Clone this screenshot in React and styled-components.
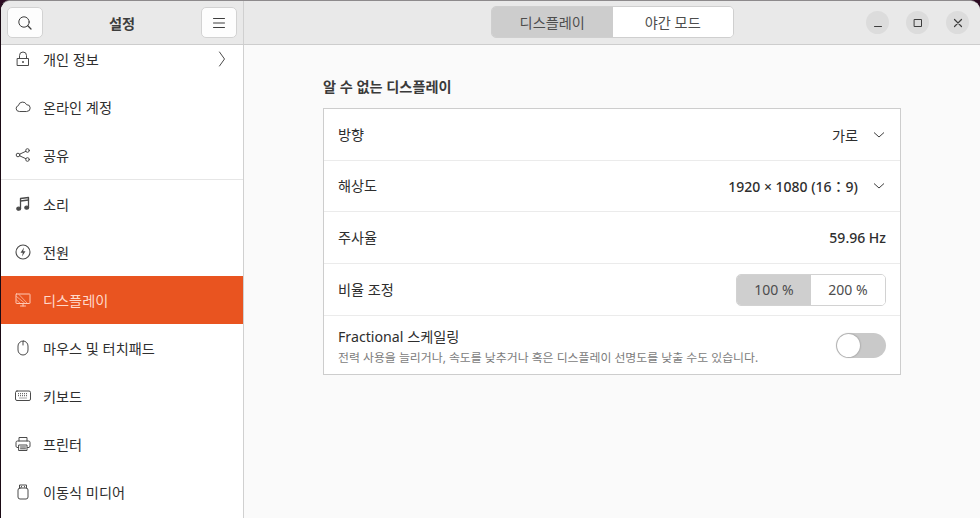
import React from "react";
import styled, { createGlobalStyle } from "styled-components";

const FONT = '"Noto Sans", "Noto Sans CJK KR", sans-serif';

const GlobalStyle = createGlobalStyle`
    html, body {
        margin: 0;
        padding: 0;
        background: #2c0a22;
    }
    body {
        font-family: ${FONT};
    }
    * {
        box-sizing: border-box;
    }
`;

const iconProps = {
    width: 16,
    height: 16,
    viewBox: "0 0 16 16",
    fill: "none",
    stroke: "currentColor",
    strokeWidth: 1,
    strokeLinecap: "round",
    strokeLinejoin: "round",
};

const Search = () => (
    <svg {...iconProps} strokeWidth={1}>
        <circle cx="7" cy="7" r="5.200" />
        <path d="M10.800 10.800 14 14" strokeWidth={1.300} />
    </svg>
);
const Menu = () => (
    <svg {...iconProps} strokeWidth={1}>
        <path d="M2.500 3.500h11M2.500 8h11M2.500 12.500h11" />
    </svg>
);
const Lock = () => (
    <svg {...iconProps}>
        <path d="M2.500 7.500h11v7h-11zM4.500 7.500V4.500a3.500 3.500 0 0 1 7 0v3" />
        <circle cx="8" cy="11" r="1" fill="currentColor" stroke="none" />
    </svg>
);
const Cloud = () => (
    <svg {...iconProps}>
        <path d="M4 12.500a3 3 0 0 1-.6-5.900 4.300 4.300 0 0 1 8.200-.9 3.400 3.400 0 0 1 .4 6.800z" />
    </svg>
);
const Share = () => (
    <svg {...iconProps}>
        <circle cx="3" cy="8" r="1.800" />
        <circle cx="12.500" cy="3.500" r="1.800" />
        <circle cx="12.500" cy="12.500" r="1.800" />
        <path d="M4.600 7.200 10.900 4.300M4.600 8.800l6.300 2.900" />
    </svg>
);
const Music = () => (
    <svg {...iconProps} strokeWidth={1.300}>
        <path d="M5.500 12.500V2.500l8-1v10" />
        <path d="M5.500 5l8-1" />
        <ellipse cx="3.700" cy="12.700" rx="1.900" ry="1.500" fill="currentColor" />
        <ellipse cx="11.700" cy="11.700" rx="1.900" ry="1.500" fill="currentColor" />
    </svg>
);
const Power = () => (
    <svg {...iconProps} strokeWidth={1.100}>
        <circle cx="8" cy="8" r="7" />
        <path d="M9 3.500 5.500 8.700h2.300L7 12.500l3.500-5.200H8.200z" fill="currentColor" stroke="none" />
    </svg>
);
const Display = () => (
    <svg {...iconProps}>
        <path d="M1.500 2h13a.5.5 0 0 1 .5.5v8.500a.5.5 0 0 1-.5.5h-13A.5.5 0 0 1 1 11V2.500A.5.5 0 0 1 1.500 2z" />
        <path d="M5.500 14h5M8 11.500V14" />
        <path d="M1.500 4.500l8 6.500M1.500 8l4 3.500M4 2.500l8 8.500" strokeWidth={0.700} />
    </svg>
);
const Mouse = () => (
    <svg {...iconProps}>
        <rect x="3" y="1" width="10" height="14" rx="5" />
        <path d="M8 1.500V5" />
    </svg>
);
const Keyboard = () => (
    <svg {...iconProps}>
        <rect x="0.500" y="3" width="15" height="9.500" rx="1.500" />
        <path d="M3 5.700h10M3 7.700h10M4.500 10h7" strokeDasharray="1 1" strokeLinecap="butt" />
    </svg>
);
const Printer = () => (
    <svg {...iconProps}>
        <path d="M4 5V1.500h8V5" />
        <path d="M3.500 11.500H2a1.500 1.500 0 0 1-1-1.400V6.500A1.500 1.500 0 0 1 2.500 5h11A1.500 1.500 0 0 1 15 6.500v3.600a1.500 1.500 0 0 1-1 1.400h-1.500" />
        <path d="M4 9h8v5.500H4zM5.500 11h5M5.500 12.800h5" />
    </svg>
);
const Usb = () => (
    <svg {...iconProps}>
        <rect x="3" y="4" width="10" height="11" rx="2" />
        <path d="M4.500 4V1h7v3M6.500 2.500v.5M9.500 2.500v.5" />
    </svg>
);
const ChevronRight = () => (
    <svg {...iconProps}>
        <path d="M5.500 1 10.500 8l-5 7" />
    </svg>
);
const ChevronDown = () => (
    <svg width="12" height="12" viewBox="0 0 12 12" fill="none" stroke="currentColor" strokeWidth="1">
        <path d="M1 3.500 6 8l5-4.500" />
    </svg>
);

const NAV_GROUPS = [
    [
        { label: "개인 정보", icon: <Lock />, more: true },
        { label: "온라인 계정", icon: <Cloud /> },
        { label: "공유", icon: <Share /> },
    ],
    [
        { label: "소리", icon: <Music /> },
        { label: "전원", icon: <Power /> },
        { label: "디스플레이", icon: <Display />, active: true },
        { label: "마우스 및 터치패드", icon: <Mouse /> },
        { label: "키보드", icon: <Keyboard /> },
        { label: "프린터", icon: <Printer /> },
        { label: "이동식 미디어", icon: <Usb /> },
    ],
];

export default function App() {
    return (
        <>
            <GlobalStyle />
            <Window>
                <Header>
                    <SideHeader>
                        <ToolButton aria-label="검색">
                            <Search />
                        </ToolButton>
                        <Title>설정</Title>
                        <ToolButton aria-label="메뉴">
                            <Menu />
                        </ToolButton>
                    </SideHeader>
                    <MainHeader>
                        <Tabs>
                            <Tab $active>디스플레이</Tab>
                            <Tab>야간 모드</Tab>
                        </Tabs>
                        <WindowControls>
                            <WindowButton aria-label="최소화">
                                <svg {...iconProps} width="12" height="12" viewBox="0 0 12 12">
                                    <path d="M2.500 9.500h7" />
                                </svg>
                            </WindowButton>
                            <WindowButton aria-label="최대화">
                                <svg {...iconProps} width="12" height="12" viewBox="0 0 12 12">
                                    <rect x="2.500" y="2.500" width="7" height="7" />
                                </svg>
                            </WindowButton>
                            <WindowButton aria-label="닫기">
                                <svg {...iconProps} width="12" height="12" viewBox="0 0 12 12" strokeWidth="1.200">
                                    <path d="M2.500 2.500l7 7M9.500 2.500l-7 7" />
                                </svg>
                            </WindowButton>
                        </WindowControls>
                    </MainHeader>
                </Header>
                <Body>
                    <Sidebar>
                        <NavList>
                            {NAV_GROUPS.map((group, i) => (
                                <NavGroup key={i}>
                                    {group.map((item) => (
                                        <NavRow key={item.label} $active={item.active}>
                                            <NavIcon $active={item.active}>{item.icon}</NavIcon>
                                            <NavLabel>{item.label}</NavLabel>
                                            {item.more && (
                                                <NavMore>
                                                    <ChevronRight />
                                                </NavMore>
                                            )}
                                        </NavRow>
                                    ))}
                                </NavGroup>
                            ))}
                        </NavList>
                    </Sidebar>
                    <Content>
                        <Heading>알 수 없는 디스플레이</Heading>
                        <Card>
                            <Row>
                                <RowLabel>방향</RowLabel>
                                <RowValue>
                                    가로
                                    <ChevronSlot>
                                        <ChevronDown />
                                    </ChevronSlot>
                                </RowValue>
                            </Row>
                            <Row>
                                <RowLabel>해상도</RowLabel>
                                <RowValue $numeric>
                                    1920 × 1080 (16：9)
                                    <ChevronSlot>
                                        <ChevronDown />
                                    </ChevronSlot>
                                </RowValue>
                            </Row>
                            <Row>
                                <RowLabel>주사율</RowLabel>
                                <RowValue $numeric>59.96 Hz</RowValue>
                            </Row>
                            <Row>
                                <RowLabel>비율 조정</RowLabel>
                                <Scale>
                                    <ScaleOption $active>100 %</ScaleOption>
                                    <ScaleOption>200 %</ScaleOption>
                                </Scale>
                            </Row>
                            <TallRow>
                                <TallText>
                                    <RowLabel>Fractional 스케일링</RowLabel>
                                    <RowHint>
                                        전력 사용을 늘리거나, 속도를 낮추거나 혹은 디스플레이 선명도를 낮출 수도 있습니다.
                                    </RowHint>
                                </TallText>
                                <Switch>
                                    <Knob />
                                </Switch>
                            </TallRow>
                        </Card>
                    </Content>
                </Body>
            </Window>
        </>
    );
}

const Window = styled.div`
    background: #fafafa;
    border-left: 1px solid #1a0a14;
    border-top: 1px solid #8d8a8c;
    border-top-left-radius: 10px;
    border-top-right-radius: 10px;
    color: #2e2e2e;
    display: flex;
    flex-direction: column;
    height: 518px;
    overflow: hidden;
    width: 980px;
`;

const Header = styled.header`
    background: #e9e9e9;
    border-bottom: 1px solid #cdcdcd;
    display: flex;
    flex-shrink: 0;
    height: 44px;
`;

const SideHeader = styled.div`
    align-items: center;
    border-right: 1px solid #d0d0d0;
    display: flex;
    flex-shrink: 0;
    justify-content: space-between;
    padding: 0 6px;
    width: 243px;
`;

const ToolButton = styled.button`
    align-items: center;
    background: #fdfdfd;
    border: 1px solid #d2d2d2;
    border-radius: 5px;
    color: #3d3d3d;
    display: flex;
    height: 31px;
    justify-content: center;
    padding: 0;
    width: 36px;
`;

const Title = styled.div`
    color: #3d3d3d;
    font-size: 14.200px;
    font-weight: 700;
`;

const MainHeader = styled.div`
    align-items: center;
    display: flex;
    flex-grow: 1;
    justify-content: flex-end;
    padding-right: 11px;
    position: relative;
`;

const Tabs = styled.div`
    border: 1px solid #cfcfcf;
    border-radius: 5px;
    display: flex;
    height: 32px;
    left: 247px;
    overflow: hidden;
    position: absolute;
    top: 5px;
    width: 243px;
`;

const Tab = styled.div`
    align-items: center;
    background: ${(props) => (props.$active ? "#cdcdcd" : "#ffffff")};
    color: #4d4d4d;
    display: flex;
    flex: 1;
    font-size: 14.200px;
    justify-content: center;
`;

const WindowControls = styled.div`
    display: flex;
    gap: 17px;
`;

const WindowButton = styled.button`
    align-items: center;
    background: #dcdcdc;
    border: none;
    border-radius: 50%;
    color: #3d3d3d;
    display: flex;
    height: 23px;
    justify-content: center;
    padding: 0;
    width: 23px;
`;

const Body = styled.div`
    display: flex;
    flex-grow: 1;
    min-height: 0;
`;

const Sidebar = styled.nav`
    background: #ffffff;
    border-right: 1px solid #d0d0d0;
    flex-shrink: 0;
    overflow: hidden;
    width: 243px;
`;

const NavList = styled.div`
    margin-top: -10px;
`;

const NavGroup = styled.div`
    & + & {
        border-top: 1px solid #e6e6e6;
    }
`;

const NavRow = styled.div`
    align-items: center;
    background: ${(props) => (props.$active ? "#e95420" : "transparent")};
    color: ${(props) => (props.$active ? "#ffd9cb" : "#2e2e2e")};
    display: flex;
    height: 48px;
    padding: 0 14px;
`;

const NavIcon = styled.span`
    color: ${(props) => (props.$active ? "#ffc9b5" : "#4a4a4a")};
    display: flex;
    margin-right: 12px;
`;

const NavLabel = styled.span`
    flex-grow: 1;
    font-size: 14.200px;
`;

const NavMore = styled.span`
    color: #4a4a4a;
    display: flex;
    margin-right: -1px;
`;

const Content = styled.main`
    flex-grow: 1;
    padding: 32px 79px 0 79px;
`;

const Heading = styled.h2`
    color: #3a3a3a;
    font-size: 14.200px;
    font-weight: 700;
    line-height: 20px;
    margin: 0 0 11px 0;
`;

const Card = styled.div`
    background: #ffffff;
    border: 1px solid #cdcdcd;
`;

const Row = styled.div`
    align-items: center;
    display: flex;
    height: 52px;
    justify-content: space-between;
    padding: 0 14px;

    & + & {
        border-top: 1px solid #ebebeb;
    }

    &:nth-child(-n + 2) {
        height: 51px;
    }
`;

const TallRow = styled(Row)`
    height: 59px;
`;

const TallText = styled.div`
    padding-top: 2px;
`;

const RowLabel = styled.div`
    color: #2e2e2e;
    font-size: 14.200px;
    line-height: 18px;
`;

const RowHint = styled.div`
    color: #7c7c7c;
    font-size: 11.900px;
    line-height: 16px;
    margin-top: 3px;
`;

const RowValue = styled.div`
    align-items: center;
    color: #2e2e2e;
    display: flex;
    font-size: ${(props) => (props.$numeric ? "14px" : "14.200px")};
    font-weight: ${(props) => (props.$numeric ? 500 : 400)};
`;

const ChevronSlot = styled.span`
    color: #3d3d3d;
    display: flex;
    margin-left: 15px;
    margin-right: 1px;
`;

const Scale = styled.div`
    border: 1px solid #d2d2d2;
    border-radius: 5px;
    display: flex;
    height: 32px;
    overflow: hidden;
    width: 150px;
`;

const ScaleOption = styled.div`
    align-items: center;
    background: ${(props) => (props.$active ? "#cfcfcf" : "#ffffff")};
    color: #4d4d4d;
    display: flex;
    flex: 1;
    font-size: 14px;
    justify-content: center;
`;

const Switch = styled.div`
    align-items: center;
    background: #c9c9c9;
    border-radius: 13px;
    display: flex;
    flex-shrink: 0;
    height: 25px;
    padding: 1px;
    width: 50px;
`;

const Knob = styled.div`
    background: #ffffff;
    border-radius: 50%;
    box-shadow: 0 0 2px rgba(0, 0, 0, 0.4);
    height: 23px;
    width: 23px;
`;
